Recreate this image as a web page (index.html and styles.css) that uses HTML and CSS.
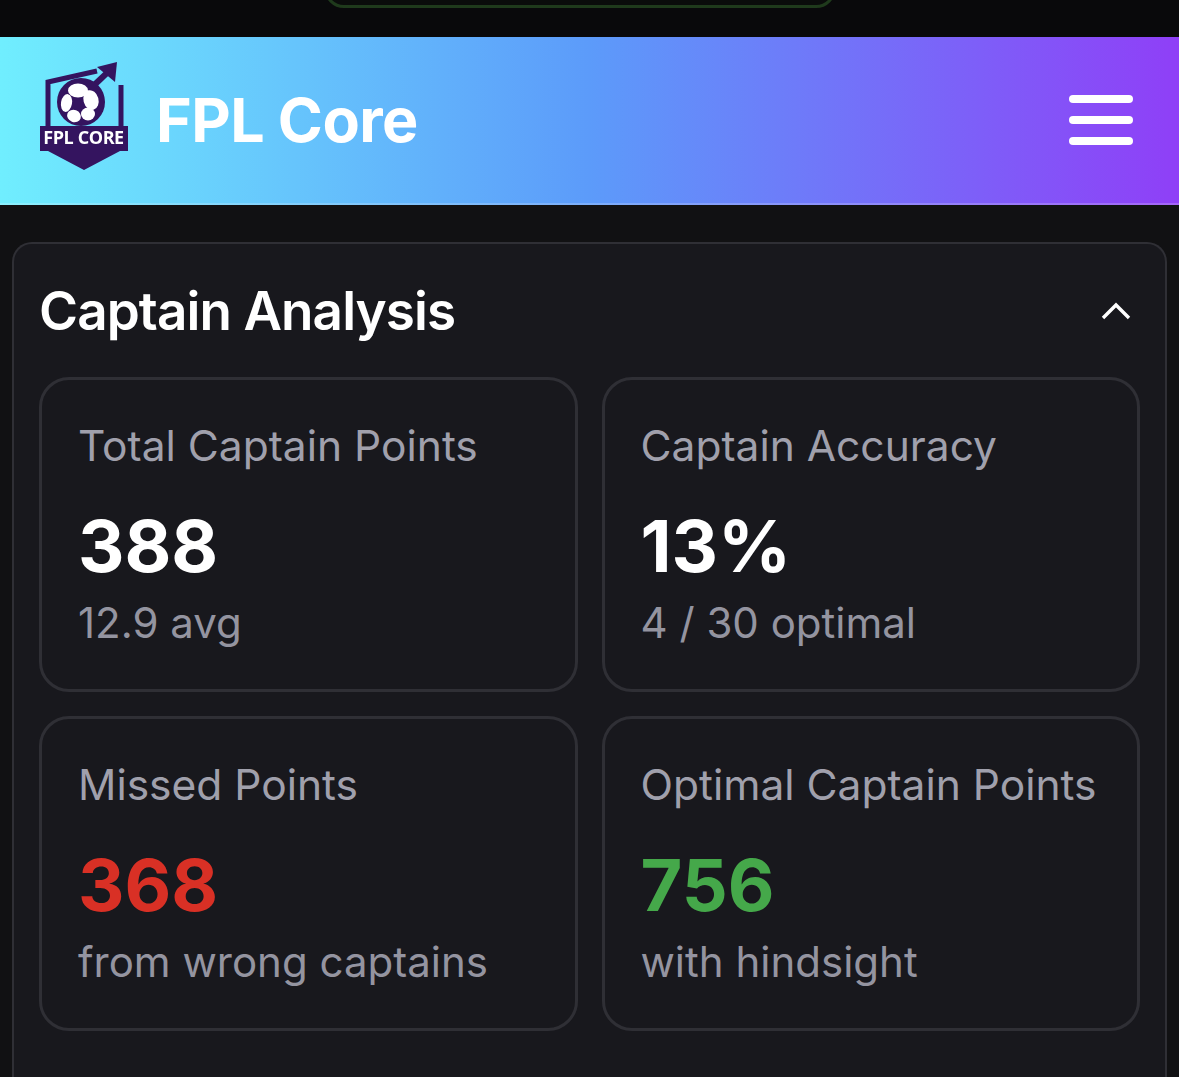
FILE: index.html
```html
<!DOCTYPE html>
<html>
<head>
  <title>FPL Core - Captain Analysis</title>
  <link rel="stylesheet" href="styles.css">
</head>
<body>
  <div class="top-strip">
    <div class="top-pill"></div>
  </div>

  <div class="header">
    <div class="brand">
      <svg class="logo" viewBox="0 0 90 110" width="90" height="110">
        <!-- goal frame and arrow -->
        <path d="M10 66V21L59 10" fill="none" stroke="#34145f" stroke-width="5"/>
        <path d="M83 66V24" fill="none" stroke="#34145f" stroke-width="5"/>
        <path d="M52 28L70 11" fill="none" stroke="#34145f" stroke-width="6"/>
        <path d="M59 6L79 1L77 21Z" fill="#34145f"/>
        <!-- ball -->
        <circle cx="43" cy="41" r="24" fill="#34145f"/>
        <ellipse cx="40" cy="29.5" rx="10" ry="7" fill="#fff"/>
        <ellipse cx="53" cy="39" rx="7.5" ry="10" transform="rotate(-15 53 39)" fill="#fff"/>
        <ellipse cx="28.5" cy="42" rx="5.5" ry="9" transform="rotate(10 28.5 42)" fill="#fff"/>
        <ellipse cx="36" cy="55" rx="7" ry="6" transform="rotate(20 36 55)" fill="#fff"/>
        <ellipse cx="50" cy="53" rx="7" ry="6.5" fill="#fff"/>
        <!-- badge -->
        <path d="M2 65H90V90H82L46 109L10 90H2Z" fill="#34145f"/>
        <text class="logo-text" x="45.5" y="83" text-anchor="middle">FPL CORE</text>
      </svg>
      <div class="brand-name">FPL Core</div>
    </div>
    <div class="menu-btn">
      <span></span>
      <span></span>
      <span></span>
    </div>
  </div>

  <div class="panel">
    <div class="panel-head">
      <div class="panel-title">Captain Analysis</div>
      <svg class="chevron" viewBox="0 0 32 20" width="32" height="20">
        <path d="M3 17L16 4L29 17" fill="none" stroke="#fff" stroke-width="3.4"/>
      </svg>
    </div>

    <div class="stat-grid">
      <div class="stat-card">
        <div class="stat-label">Total Captain Points</div>
        <div class="stat-value">388</div>
        <div class="stat-sub">12.9 avg</div>
      </div>
      <div class="stat-card">
        <div class="stat-label">Captain Accuracy</div>
        <div class="stat-value">13%</div>
        <div class="stat-sub">4 / 30 optimal</div>
      </div>
      <div class="stat-card">
        <div class="stat-label">Missed Points</div>
        <div class="stat-value red">368</div>
        <div class="stat-sub">from wrong captains</div>
      </div>
      <div class="stat-card">
        <div class="stat-label">Optimal Captain Points</div>
        <div class="stat-value green">756</div>
        <div class="stat-sub">with hindsight</div>
      </div>
    </div>
  </div>
</body>
</html>
```

FILE: styles.css
```css
* {
  margin: 0;
  padding: 0;
  box-sizing: border-box;
}

body {
  height: 1077px;
  display: flex;
  flex-direction: column;
  font-family: Inter, "Liberation Sans", sans-serif;
  background: #111113;
  color: #fff;
  overflow: hidden;
}

.top-strip {
  height: 37px;
  background: #09090b;
  overflow: hidden;
}

.top-pill {
  width: 512px;
  height: 40px;
  margin: -32px 0 0 324px;
  border: 3px solid #1f3a1c;
  border-radius: 32px;
  background: #0a0c0b;
}

.header {
  height: 168px;
  padding: 0 46px 0 38px;
  display: flex;
  justify-content: space-between;
  align-items: center;
  background: linear-gradient(90deg, #70eefe 0%, #5c9bfa 50%, #8f3ff7 100%);
  border-bottom: 2px solid rgba(255, 255, 255, 0.2);
}

.brand {
  display: flex;
  align-items: center;
  gap: 28px;
}

.logo {
  display: block;
  margin-top: -8px;
  filter: blur(0.6px);
}

.logo-text {
  font-family: "Open Sans", sans-serif;
  font-size: 18px;
  font-weight: 700;
  fill: #fff;
  letter-spacing: -0.4px;
}

.brand-name {
  font-size: 61px;
  font-weight: 700;
  letter-spacing: -0.6px;
}

.menu-btn {
  width: 64px;
  display: flex;
  flex-direction: column;
  gap: 13px;
}

.menu-btn span {
  height: 8px;
  border-radius: 4px;
  background: #fff;
}

.panel {
  flex: 1;
  margin: 37px 12px 0;
  padding: 0 25px;
  background: #18181d;
  border: 2px solid #2f2f35;
  border-bottom: none;
  border-radius: 20px 20px 0 0;
}

.panel-head {
  height: 133px;
  display: flex;
  justify-content: space-between;
  align-items: center;
  padding-right: 8px;
}

.panel-title {
  font-size: 53px;
  font-weight: 600;
  letter-spacing: -0.9px;
}

.chevron {
  display: block;
}

.stat-grid {
  display: grid;
  grid-template-columns: 1fr 1fr;
  gap: 24px;
}

.stat-card {
  height: 315px;
  padding: 38px 36px 0;
  border: 3px solid #2f2f35;
  border-radius: 30px;
}

.stat-label {
  font-size: 42.5px;
  line-height: 56px;
  color: #a0a0ac;
}

.stat-value {
  margin-top: 30px;
  font-size: 72px;
  font-weight: 700;
  line-height: 84px;
}

.stat-value.red {
  color: #d93025;
}

.stat-value.green {
  color: #45a84a;
}

.stat-sub {
  margin-top: 7px;
  font-size: 42px;
  line-height: 56px;
  color: #9494a0;
}
```
